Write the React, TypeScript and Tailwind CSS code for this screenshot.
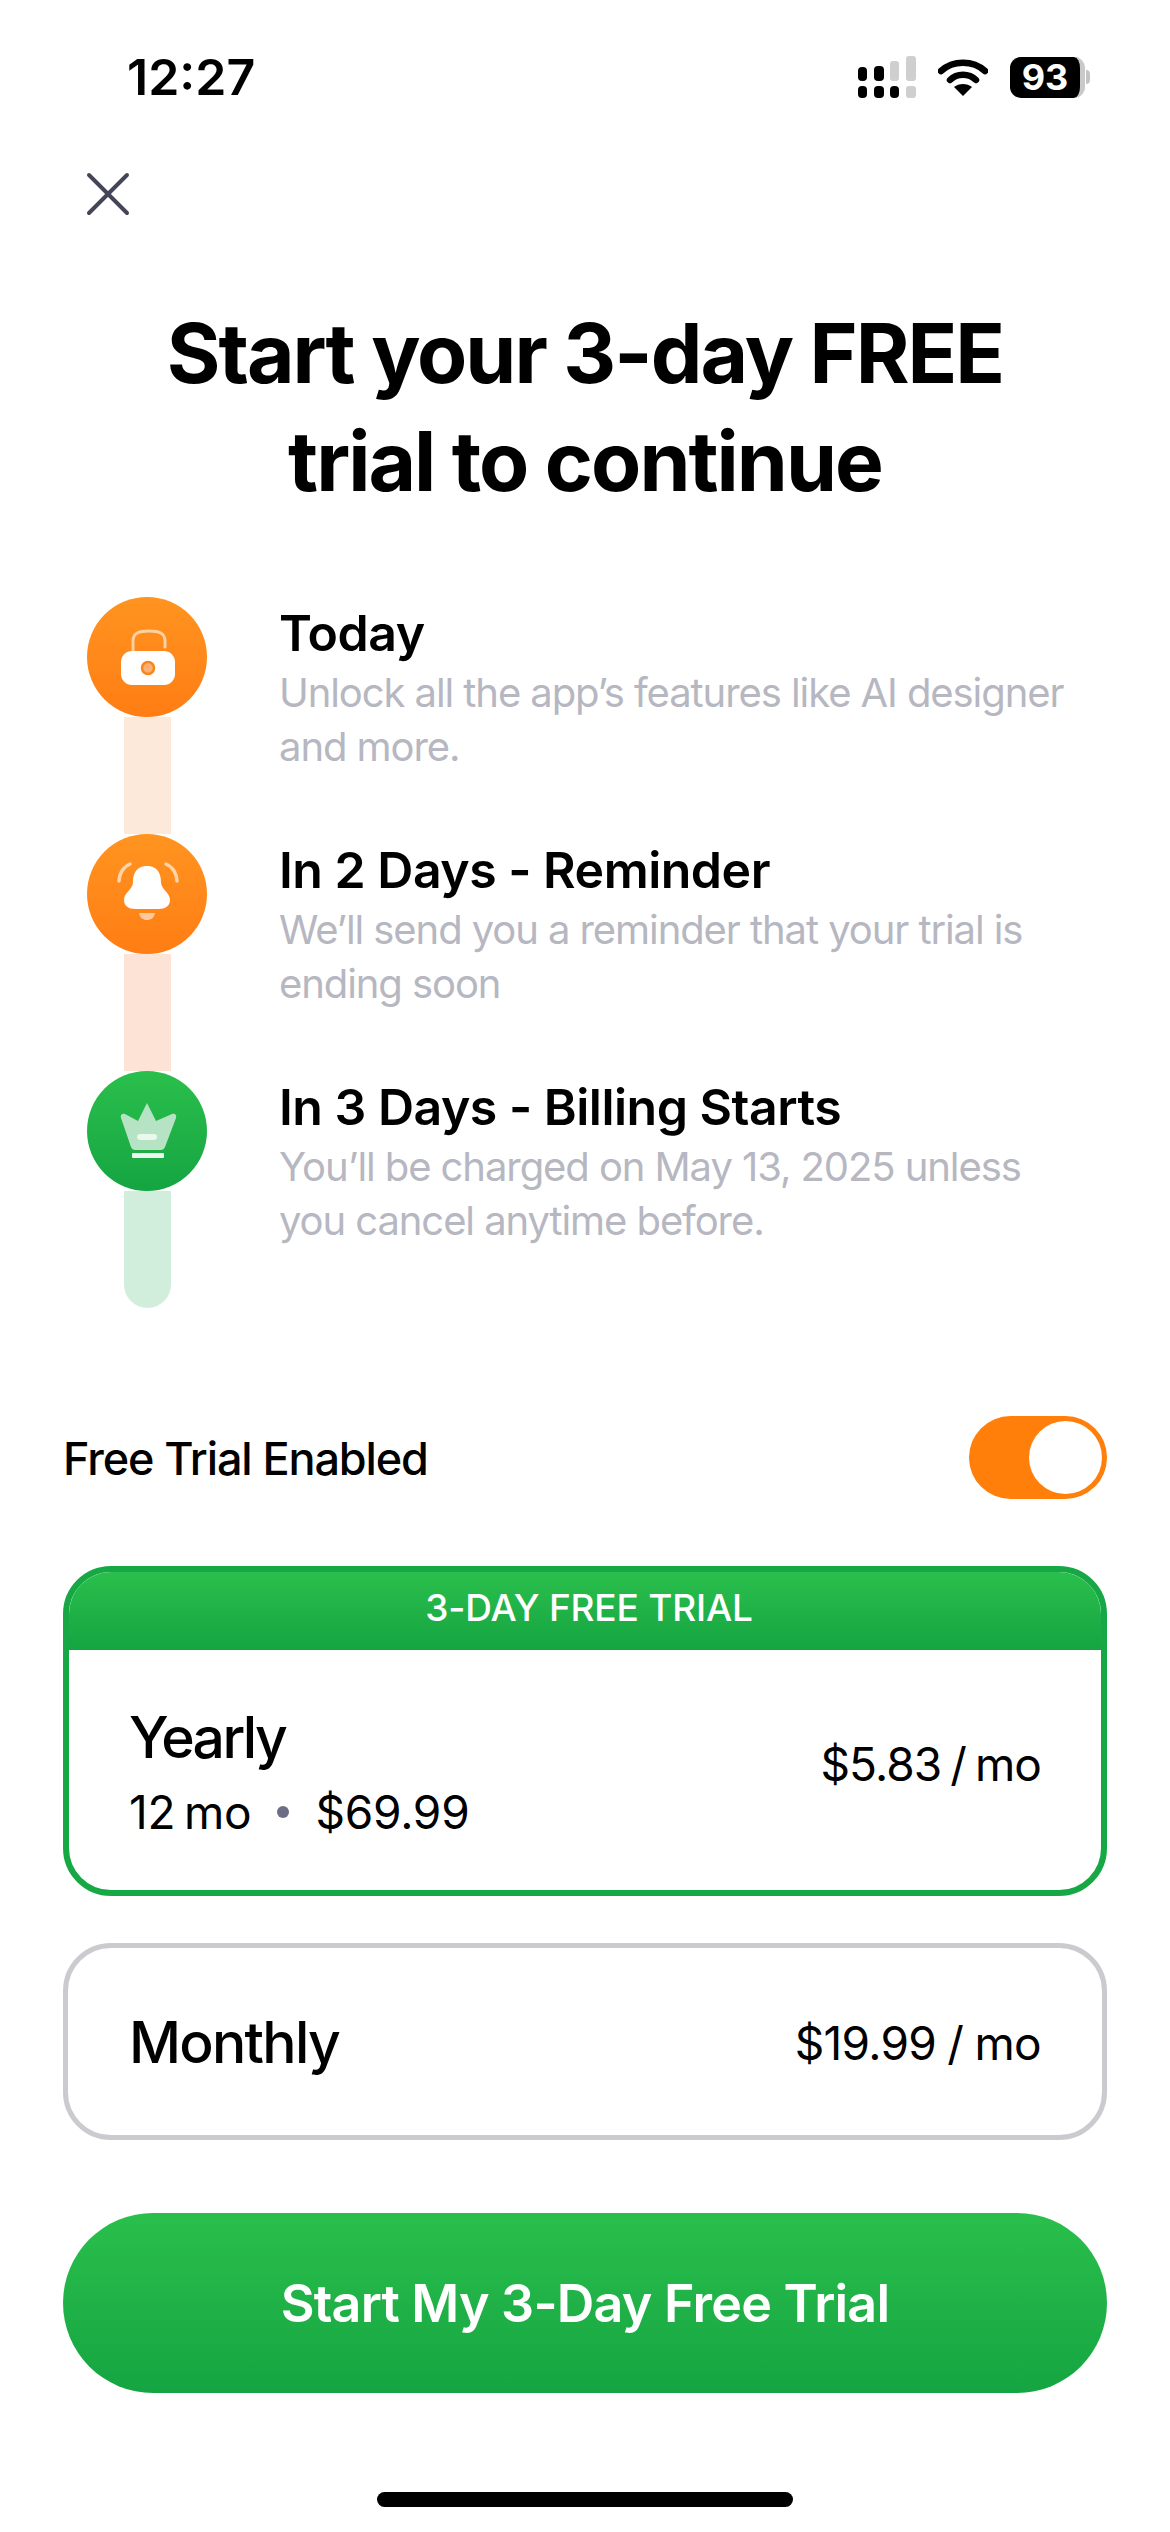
import React from 'react';

const SignalIcon = () => (
    <svg width="58" height="42" viewBox="0 0 58 42">
        <rect x="0" y="11" width="9" height="14" rx="4" fill="#000" />
        <rect x="16" y="10" width="10" height="15" rx="4" fill="#000" />
        <rect x="32" y="5" width="9" height="20" rx="3" fill="#cfcfcf" />
        <rect x="48" y="0" width="10" height="25" rx="3" fill="#cfcfcf" />
        <rect x="0" y="30" width="9" height="12" rx="4" fill="#000" />
        <rect x="16" y="30" width="10" height="12" rx="4" fill="#000" />
        <rect x="32" y="30" width="9" height="12" rx="4" fill="#000" />
        <rect x="48" y="30" width="10" height="12" rx="3" fill="#cfcfcf" />
    </svg>
);

const WifiIcon = () => (
    <svg width="50" height="38" viewBox="0 0 50 38" fill="none">
        <path d="M3 13C15 2 35 2 47 13" stroke="#000" strokeWidth="6.5" strokeLinecap="round" />
        <path d="M12 22C19 15 31 15 38 22" stroke="#000" strokeWidth="6.5" strokeLinecap="round" />
        <path d="M25 38L16 29C21 25 29 25 34 29Z" fill="#000" />
    </svg>
);

const Battery = () => (
    <div className="flex items-center">
        <div className="flex h-[41px] w-[75px] items-center justify-center rounded-[11px] border-r-[5px] border-[#c9c9c9] bg-black">
            <span className="text-[36px] leading-none font-bold text-white">93</span>
        </div>
        <div className="ml-[1px] h-[14px] w-[4px] rounded-r-full bg-[#c4c4c4]" />
    </div>
);

const LockIcon = () => (
    <svg width="120" height="120" viewBox="0 0 120 120" fill="none">
        <path d="M46 55V44C46 36 52 34 62 34C72 34 78 36 78 44V50" stroke="#ffd0a0" strokeWidth="3" strokeLinecap="round" />
        <rect x="34" y="54" width="54" height="34" rx="11" fill="#fff" />
        <circle cx="61" cy="71" r="6" fill="#fcb172" stroke="#f9851f" strokeWidth="2.5" />
    </svg>
);

const BellIcon = () => (
    <svg width="120" height="120" viewBox="0 0 120 120" fill="none">
        <path d="M32 47C32 40 36 33 43 30" stroke="#ffd3a8" strokeWidth="3.5" strokeLinecap="round" />
        <path d="M90 47C90 40 86 33 79 30" stroke="#ffd3a8" strokeWidth="3.5" strokeLinecap="round" />
        <path d="M60 32C72 32 74 42 74 48C74 56 83 58 83 66C83 72 78 75 72 75H48C42 75 37 72 37 66C37 58 46 56 46 48C46 42 48 32 60 32Z" fill="#fff" />
        <path d="M52 79H68C67 84 64 86 60 86C56 86 53 84 52 79Z" fill="#ffc99b" />
    </svg>
);

const CrownIcon = () => (
    <svg width="120" height="120" viewBox="0 0 120 120" fill="none">
        <path d="M60 32L69 50L85 43C88 42 90 44 89 47L78 76C77 78 76 79 74 79H48C46 79 45 78 44 76L34 47C33 44 35 42 38 43L51 50Z" fill="#b5e3c3" />
        <rect x="50" y="63" width="20" height="6" rx="3" fill="#eaf8ee" />
        <rect x="45" y="82" width="32" height="5" rx="1" fill="#eaf8ee" />
    </svg>
);

const steps = [
    {
        title: 'Today',
        lines: ['Unlock all the app’s features like AI designer', 'and more.'],
        circle: 'bg-gradient-to-b from-[#ff9420] to-[#ff7d14]',
        bar: 'bg-[#fde9da]',
        icon: <LockIcon />,
    },
    {
        title: 'In 2 Days - Reminder',
        lines: ['We’ll send you a reminder that your trial is', 'ending soon'],
        circle: 'bg-gradient-to-b from-[#ff9420] to-[#ff7d14]',
        bar: 'bg-[#fde3d6]',
        icon: <BellIcon />,
    },
    {
        title: 'In 3 Days - Billing Starts',
        lines: ['You’ll be charged on May 13, 2025 unless', 'you cancel anytime before.'],
        circle: 'bg-gradient-to-b from-[#2abf4c] to-[#14a542]',
        bar: 'bg-[#d1eedd] rounded-b-full',
        icon: <CrownIcon />,
    },
];

const App = () => {
    return (
        <div className="flex h-[2532px] w-[1170px] flex-col overflow-hidden bg-white font-['Inter',sans-serif] text-black">
            {/* Status bar */}
            <div className="flex h-[112px] items-center justify-between pt-[42px] pr-[80px] pl-[127px]">
                <span className="text-[50px] leading-none font-semibold">12:27</span>
                <div className="flex items-center gap-[22px]">
                    <SignalIcon />
                    <WifiIcon />
                    <Battery />
                </div>
            </div>

            {/* Close */}
            <div className="mt-[60px] pl-[86px]">
                <svg width="44" height="44" viewBox="0 0 44 44" fill="none" stroke="#45455a" strokeWidth="4" strokeLinecap="round">
                    <path d="M3 3L41 41M41 3L3 41" />
                </svg>
            </div>

            <h1 className="mt-[84px] text-center text-[82px] leading-[108px] font-bold tracking-[-0.024em]">
                Start your 3-day FREE
                <br />
                trial to continue
            </h1>

            {/* Timeline */}
            <div className="mt-[81px] flex flex-col pl-[87px]">
                {steps.map((step) => (
                    <div key={step.title} className="flex h-[237px] gap-[72px]">
                        <div className="flex w-[120px] flex-col items-center">
                            <div className={`flex h-[120px] w-[120px] shrink-0 items-center justify-center rounded-full ${step.circle}`}>
                                {step.icon}
                            </div>
                            <div className={`h-[117px] w-[47px] ${step.bar}`} />
                        </div>
                        <div className="flex flex-col pt-[6px]">
                            <span className="text-[50px] leading-[60px] font-semibold tracking-[-0.01em]">{step.title}</span>
                            <span className="mt-[3px] text-[40px] leading-[54px] tracking-[-0.027em] text-[#b6b7c1]">
                                {step.lines[0]}
                                <br />
                                {step.lines[1]}
                            </span>
                        </div>
                    </div>
                ))}
            </div>

            {/* Toggle row */}
            <div className="mt-[108px] flex items-center justify-between px-[63px]">
                <span className="pt-[2px] text-[45px] font-medium tracking-[-0.025em]">Free Trial Enabled</span>
                <div className="flex h-[83px] w-[138px] items-center justify-end rounded-full bg-[#ff7f0a] pr-[5px]">
                    <div className="h-[73px] w-[73px] rounded-full bg-white" />
                </div>
            </div>

            {/* Plans */}
            <div className="mt-[67px] flex flex-col gap-[47px] px-[63px]">
                <div className="flex h-[330px] flex-col overflow-hidden rounded-[48px] border-[6px] border-[#17a846]">
                    <div className="flex h-[78px] shrink-0 items-center justify-center bg-gradient-to-b from-[#2abf4c] to-[#14a542] pb-[6px] pl-[8px] text-[37px] font-medium tracking-[-0.005em] text-white">
                        3-DAY FREE TRIAL
                    </div>
                    <div className="flex flex-1 items-center justify-between pr-[60px] pl-[60px]">
                        <div className="flex flex-col pt-[3px]">
                            <span className="text-[57px] leading-[70px] font-medium tracking-[-0.045em]">Yearly</span>
                            <div className="mt-[11px] flex items-center text-[46px] leading-[56px] tracking-[-0.005em]">
                                <span className="[word-spacing:-4px]">12 mo</span>
                                <span className="mx-[26px] h-[12px] w-[12px] rounded-full bg-[#6d6d85]" />
                                <span>$69.99</span>
                            </div>
                        </div>
                        <span className="mb-[12px] text-[46px] tracking-[-0.02em] [word-spacing:-3px]">$5.83 / mo</span>
                    </div>
                </div>
                <div className="flex h-[197px] items-center justify-between rounded-[48px] border-[5px] border-[#cbcbcf] pt-[3px] pr-[61px] pl-[61px]">
                    <span className="text-[57px] font-medium tracking-[-0.03em]">Monthly</span>
                    <span className="text-[46px] tracking-[-0.015em] [word-spacing:-1px]">$19.99 / mo</span>
                </div>
            </div>

            <div className="mt-[73px] px-[63px]">
                <button className="flex h-[180px] w-full items-center justify-center rounded-full bg-gradient-to-b from-[#2abf4c] to-[#14a542] pt-[2px] text-[52px] font-semibold tracking-[-0.015em] text-white">
                    Start My 3-Day Free Trial
                </button>
            </div>

            {/* Home indicator */}
            <div className="mt-auto mb-[25px] flex justify-center">
                <div className="h-[15px] w-[416px] rounded-full bg-black" />
            </div>
        </div>
    );
};

export default App;
